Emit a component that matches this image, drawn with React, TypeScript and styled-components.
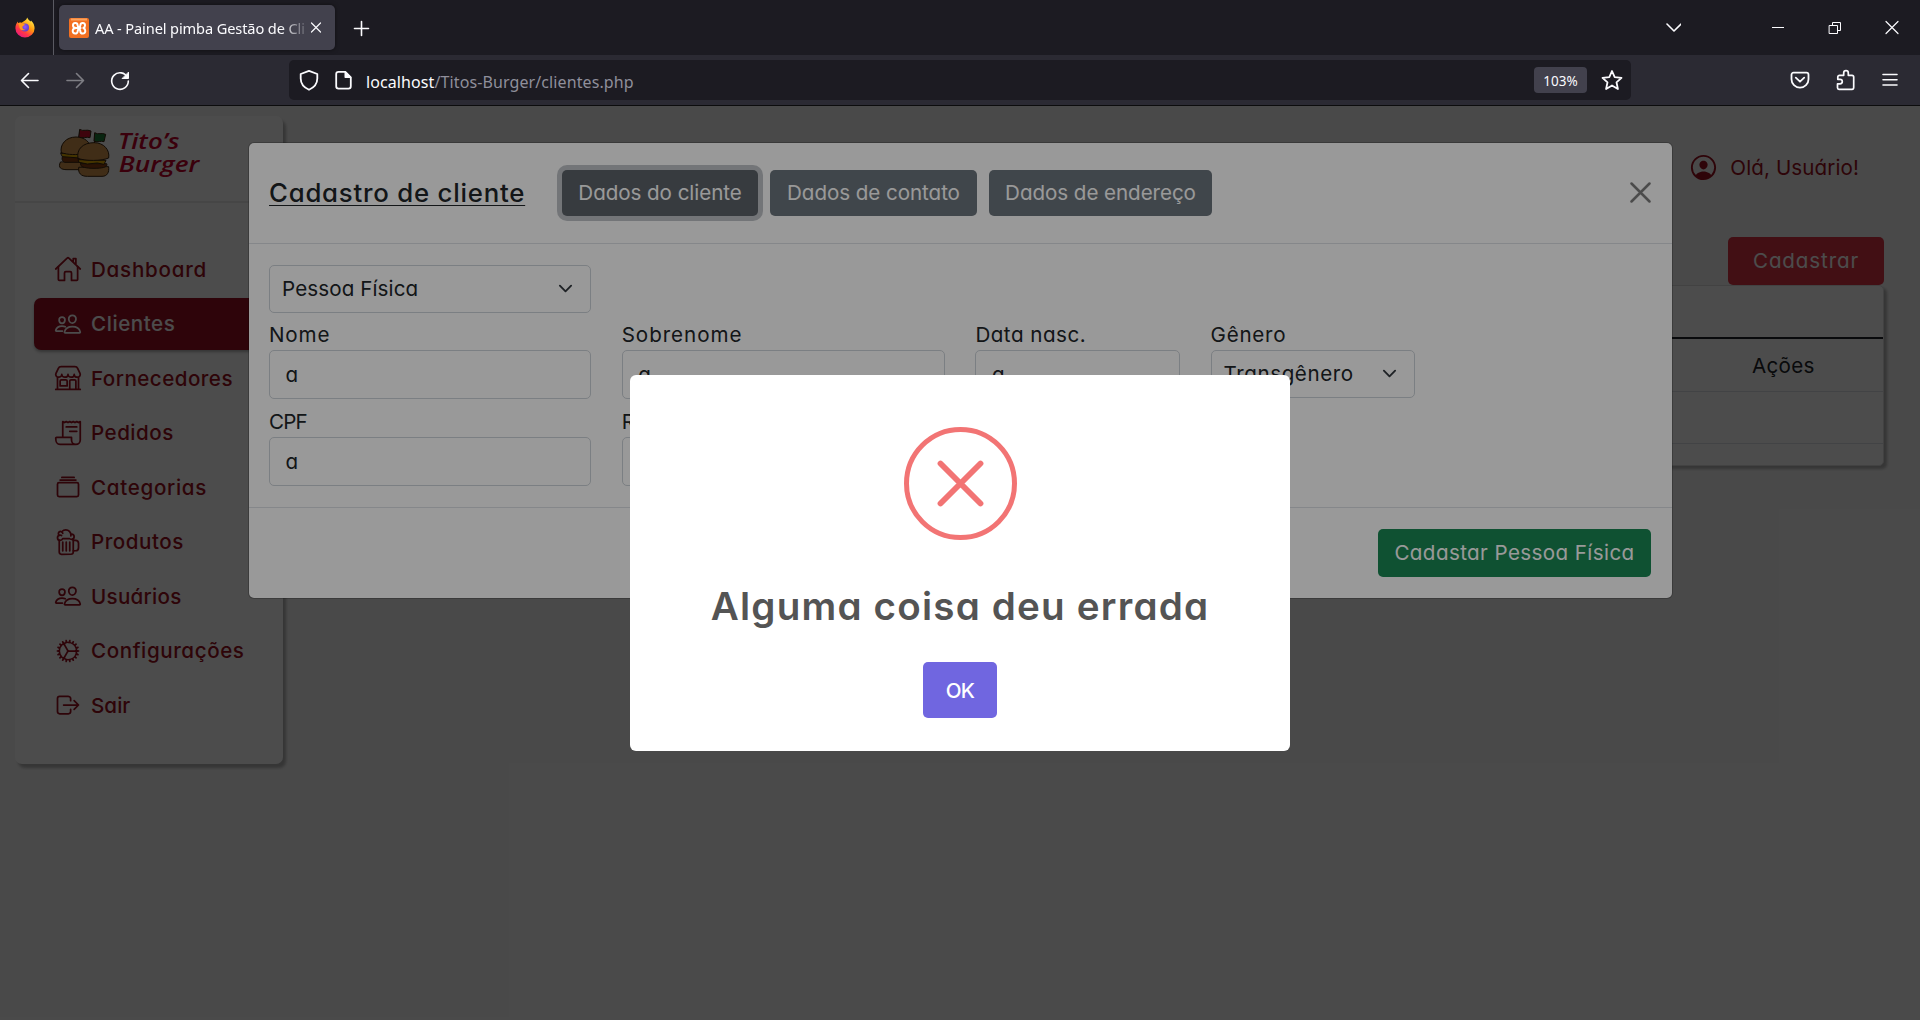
import React from 'react';
import styled, { createGlobalStyle } from 'styled-components';
import {
  IoAlbumsOutline,
  IoBeerOutline,
  IoCogOutline,
  IoHomeOutline,
  IoLogOutOutline,
  IoPeopleOutline,
  IoPersonCircleOutline,
  IoReceiptOutline,
  IoStorefrontOutline,
} from 'react-icons/io5';

const GlobalStyle = createGlobalStyle`
  *, *::before, *::after { box-sizing: border-box; }
  body {
    margin: 0;
    overflow: hidden;
    font-family: Inter, "Noto Sans", sans-serif;
    font-feature-settings: "cv11";
    font-size: 20.6px;
    color: #212529;
  }
  button { font: inherit; font-feature-settings: inherit; cursor: pointer; }
`;

/* ---------- browser window ---------- */

const Window = styled.div`
  width: 100vw;
  height: 100vh;
  display: flex;
  flex-direction: column;
  overflow: hidden;
`;

const Chrome = styled.header`
  flex: none;
  height: 106px;
  border-bottom: 1px solid #0c0c0d;
  background: #2b2a33;
  color: #fbfbfe;
  font-family: "Noto Sans", sans-serif;
`;

const TabStrip = styled.div`
  height: 55px;
  display: flex;
  align-items: center;
  background: #1c1b22;
`;

const FirefoxSlot = styled.div`
  width: 54px;
  height: 55px;
  padding-left: 15px;
  display: flex;
  align-items: center;
  border-right: 1px solid #5a5a62;
`;

const Tab = styled.div`
  width: 276px;
  height: 45px;
  margin-left: 5px;
  padding: 0 9px 0 10px;
  display: flex;
  align-items: center;
  border-radius: 5px;
  background: #42414d;
  box-shadow: 0 0 4px rgba(0, 0, 0, 0.5);
`;

const TabTitle = styled.span`
  flex: 1;
  margin-left: 6px;
  overflow: hidden;
  white-space: nowrap;
  font-size: 14.6px;
  letter-spacing: -0.12px;
  mask-image: linear-gradient(to right, #000 88%, transparent 102%);
`;

const Spacer = styled.div`
  flex: 1;
`;

const WindowControls = styled.div`
  display: flex;
  align-items: center;
  gap: 35px;
  padding-right: 17px;
`;

const NavBar = styled.div`
  height: 50px;
  display: flex;
  align-items: center;
`;

const NavButtons = styled.div`
  width: 289px;
  padding-left: 18px;
  display: flex;
  gap: 21px;
`;

const UrlBar = styled.div`
  width: 1342px;
  height: 40px;
  padding: 0 7px 0 8px;
  display: flex;
  align-items: center;
  border-radius: 5px;
  background: #1c1b22;
`;

const Url = styled.span`
  flex: 1;
  margin-left: 10px;
  padding-top: 3px;
  font-size: 16px;
  letter-spacing: 0.1px;
  color: #8f8f9b;
`;

const Host = styled.span`
  color: #fbfbfe;
`;

const ZoomChip = styled.span`
  width: 53px;
  height: 26px;
  margin-right: 13px;
  border-radius: 4px;
  background: #42414d;
  font-size: 13.5px;
  line-height: 28px;
  text-align: center;
`;

const ToolbarIcons = styled.div`
  margin-left: auto;
  padding-right: 18px;
  display: flex;
  gap: 21px;
`;

const ChromeIcon = styled.svg<{ $size?: number; $dim?: boolean }>`
  flex: none;
  display: block;
  width: ${(p) => p.$size ?? 24}px;
  height: ${(p) => p.$size ?? 24}px;
  fill: none;
  stroke: currentColor;
  stroke-width: 1.6;
  stroke-linecap: round;
  stroke-linejoin: round;
  opacity: ${(p) => (p.$dim ? 0.4 : 1)};
`;

const TabsMenuIcon = styled(ChromeIcon)`
  margin-right: 52px;
`;

const RestoreIcon = styled(ChromeIcon)`
  margin: 0 3px 0 4px;
`;

const PageIcon = styled(ChromeIcon)`
  margin-left: 11px;
`;

/* ---------- page behind the dialogs ---------- */

const Viewport = styled.div`
  position: relative;
  flex: 1;
  min-height: 0;
  background: #f6f6f6;
`;

const Page = styled.div`
  height: 100%;
  display: grid;
  grid-template-columns: 268px 1fr;
  gap: 17px;
  padding: 10px 36px 0 15px;
  align-items: start;
`;

const Sidebar = styled.aside`
  height: 648px;
  border-radius: 7px;
  background: #fff;
  box-shadow: 3px 4px 3px #b4b4b4;
`;

const Brand = styled.div`
  height: 88px;
  padding-left: 35px;
  border-bottom: 2px solid #ececec;
`;

const Menu = styled.nav`
  padding: 40.4px 0 0 19px;
  display: flex;
  flex-direction: column;
  gap: 2.5px;
`;

const MenuItem = styled.a<{ $active?: boolean; $spacing: number }>`
  width: 230px;
  height: 52px;
  padding-left: 20px;
  display: flex;
  align-items: center;
  gap: 9px;
  border-radius: 7px;
  font-weight: 500;
  letter-spacing: ${(p) => p.$spacing}px;
  color: ${(p) => (p.$active ? '#fff' : '#9b1020')};
  background: ${(p) => (p.$active ? '#9b1123' : 'transparent')};
  box-shadow: ${(p) => (p.$active ? '0 2px 3px rgba(0, 0, 0, 0.3)' : 'none')};

  svg {
    flex: none;
    width: 28px;
    height: 28px;
  }
`;

const Main = styled.main`
  display: flex;
  flex-direction: column;
  align-items: flex-end;
`;

const UserGreeting = styled.div`
  height: 31px;
  margin: 36px 25px 0 0;
  display: flex;
  align-items: center;
  gap: 11px;
  letter-spacing: 0.1px;
  color: #9b1020;

  svg {
    width: 31px;
    height: 31px;
  }
`;

const RegisterButton = styled.button`
  width: 156px;
  height: 48px;
  margin-top: 54px;
  padding: 0 0 1px;
  border: 0;
  border-radius: 5px;
  background: #dc3545;
  color: #fff;
  letter-spacing: 0.86px;
`;

const TableCard = styled.section`
  width: 100%;
  height: 181px;
  border: 1px solid #dfdfdf;
  border-radius: 5px;
  background: #fff;
  box-shadow: 3px 3px 3px #b4b4b4;
`;

const TableRow = styled.div<{ $height: number; $line: string }>`
  height: ${(p) => p.$height}px;
  display: flex;
  align-items: center;
  justify-content: flex-end;
  border-bottom: ${(p) => p.$line};
`;

const ActionsHeading = styled.span`
  width: 131px;
  letter-spacing: 0.3px;
`;

/* ---------- customer form dialog ---------- */

const Layer = styled.div<{ $shade: number; $align: string }>`
  position: absolute;
  inset: 0;
  display: flex;
  justify-content: center;
  align-items: ${(p) => p.$align};
  background: rgba(0, 0, 0, ${(p) => p.$shade});
`;

const FormDialog = styled.div`
  width: 1425px;
  height: 457px;
  margin: 36px 0 0 1px;
  border: 1px solid rgba(0, 0, 0, 0.2);
  background-clip: padding-box;
  background-color: #fff;
  border-radius: 6px;
`;

const FormHeader = styled.div`
  height: 101px;
  padding: 0 21px 1px 20px;
  display: flex;
  align-items: center;
  border-bottom: 1px solid #dee2e6;
`;

const FormTitle = styled.h5`
  width: 293px;
  margin: 0;
  font-size: 25.75px;
  font-weight: 500;
  letter-spacing: 0.79px;
  text-decoration: underline 1px;
  text-underline-offset: 3px;
  text-decoration-skip-ink: none;
`;

const StepButtons = styled.div`
  display: flex;
  gap: 12px;
`;

const StepButton = styled.button<{ $width: number; $active?: boolean }>`
  width: ${(p) => p.$width}px;
  height: 46px;
  padding: 0;
  border: 0;
  border-radius: 5px;
  color: #fff;
  letter-spacing: -0.06px;
  background: ${(p) => (p.$active ? '#5c636a' : '#6c757d')};
  box-shadow: ${(p) => (p.$active ? '0 0 0 5px rgba(130, 138, 145, 0.5)' : 'none')};
`;

const CloseIcon = styled.svg`
  width: 21px;
  height: 21px;
  margin-left: auto;
  opacity: 0.5;
`;

const FormBody = styled.div`
  height: 264px;
  padding: 21px 20px 0;
  border-bottom: 1px solid #dee2e6;
`;

const FieldGrid = styled.div`
  margin-top: 6.7px;
  display: grid;
  grid-template-columns: 322px 323px 204.5px 204px;
  gap: 7.7px 30.7px;
`;

const FieldLabel = styled.label<{ $spacing: number }>`
  display: block;
  height: 30px;
  line-height: 30px;
  letter-spacing: ${(p) => p.$spacing}px;
`;

const Input = styled.div`
  height: 49.3px;
  padding-left: 15.5px;
  border: 1px solid #ced4da;
  border-radius: 5px;
  line-height: 48.5px;
`;

const SelectBox = styled.div<{ $width: number; $spacing: number }>`
  width: ${(p) => p.$width}px;
  height: 48.3px;
  padding: 0 17px 1px 12px;
  display: flex;
  align-items: center;
  justify-content: space-between;
  border: 1px solid #ced4da;
  border-radius: 5px;
  letter-spacing: ${(p) => p.$spacing}px;
`;

const FormFooter = styled.div`
  padding: 21px 21px 0;
  display: flex;
  justify-content: flex-end;
`;

const SubmitButton = styled.button`
  width: 273px;
  height: 48px;
  padding: 0 0 1px;
  border: 0;
  border-radius: 5px;
  background: #198754;
  color: #fff;
  letter-spacing: 0.4px;
`;

/* ---------- error alert ---------- */

const Alert = styled.div`
  width: 660px;
  height: 376px;
  padding-top: 52px;
  display: flex;
  flex-direction: column;
  align-items: center;
  border-radius: 6px;
  background: #fff;
`;

const AlertTitle = styled.h2`
  margin: 41px 0 0;
  font-size: 38.6px;
  line-height: 50px;
  font-weight: 600;
  letter-spacing: 1.2px;
  white-space: nowrap;
  color: #545454;
`;

const OkButton = styled.button`
  width: 74px;
  height: 56px;
  margin-top: 31px;
  padding: 0;
  border: 0;
  border-radius: 5px;
  background: #7066e0;
  color: #fff;
  font-weight: 500;
  letter-spacing: -0.6px;
`;

/* ---------- drawings ---------- */

const FirefoxLogo = () => (
  <svg width="20" height="21" viewBox="0 0 20 21">
    <defs>
      <linearGradient id="ffBody" x1="0.85" y1="0.05" x2="0.2" y2="1">
        <stop offset="0" stopColor="#fff44f" />
        <stop offset="0.4" stopColor="#ff980e" />
        <stop offset="0.7" stopColor="#ff3647" />
        <stop offset="1" stopColor="#e31587" />
      </linearGradient>
      <radialGradient id="ffGlobe" cx="0.5" cy="0.4" r="0.6">
        <stop offset="0" stopColor="#9059ff" />
        <stop offset="1" stopColor="#5b3bc4" />
      </radialGradient>
    </defs>
    <path
      d="M12.300 0.600c.5 1.700 2 2.700 3.100 3.900.5-.2.6-.7.6-1 2.400 2.100 3.600 5 3.600 7.700a9.600 9.300 0 0 1-19.200 0c0-2.600.9-5 2.500-6.700 0 .8.2 1.300.5 1.700.9-.8 2.200-.9 3.300-.5C8.200 4.500 11.300 3.600 12.300.6z"
      fill="url(#ffBody)"
    />
    <circle cx="10" cy="10.600" r="4" fill="url(#ffGlobe)" />
    <path d="M3.300 6.200c1.500-.8 3-.5 4 .6 1 0 2 .1 2.600.8-.3 1.100-1.900 1.200-2.400 1.900-.3 1.500.6 3.300 2.900 3.300-2.900 1.700-6.300-.7-6.100-3.900z" fill="#ff9a1c" />
  </svg>
);

/* Four rounded lobes joined by a crossbar */
const XamppLogo = () => (
  <svg width="20" height="20" viewBox="0 0 20 20">
    <rect width="20" height="20" rx="2" fill="#f37021" />
    <rect x="2" y="0.500" width="16" height="2" fill="#fba35e" />
    <path
      d="M7.600 9.900H12.400M7.600 9.900C5 9.900 4 8.800 4 7.400a2.300 2.300 0 0 1 4.600-.2c0 1.200.6 1.500 1.400 1.500s1.400-.3 1.400-1.500a2.300 2.300 0 0 1 4.600.2c0 1.400-.8 2.200-1.600 2.600 1 .5 1.900 1.600 1.900 3a2.500 2.500 0 0 1-5 .2c0-1.300-.5-1.700-1.300-1.700s-1.300.4-1.300 1.700a2.500 2.500 0 0 1-5-.2c0-1.800 1.400-3.100 3.900-3.100z"
      fill="none"
      stroke="#fff"
      strokeWidth="2"
      strokeLinejoin="round"
    />
  </svg>
);

const Chevron = () => (
  <svg width="15" height="15" viewBox="0 0 16 16" fill="none" stroke="#343a40" strokeWidth="2" strokeLinecap="round" strokeLinejoin="round">
    <path d="m2 5 6 6 6-6" />
  </svg>
);

/* Two stacked hamburgers with flags beside the wordmark */
const TitosLogo = () => (
  <svg width="170" height="75" viewBox="0 0 510 225">
    <g stroke="#3a2510" strokeWidth="3" strokeLinejoin="round" strokeLinecap="round">
      <path d="M86 78 90 44" />
      <path d="M90 44c10 6 20-2 33 4l-3 20c-12-4-20 4-33-1z" fill="#d0102c" />
      <path d="M31 142c-8 16 2 22 20 22h50v-24z" fill="#d8984e" />
      <path d="M38 124h66v18H44c-8-3-10-12-6-18z" fill="#8a3f10" />
      <path d="M33 115h75v12l-20 2-50-4z" fill="#e8b000" />
      <path d="M34 113c-6-24 14-47 44-47 26 0 44 16 44 36l-20 14c-22 4-48 4-68-3z" fill="#d8984e" />
      <path d="M133 94 135 54" />
      <path d="M135 54c10 6 20-2 32 4l-5 22c-10-4-18 4-29-1z" fill="#1d7d36" />
      <path d="M86 158c-2 16 6 26 26 26h44c16 0 22-12 20-28z" fill="#d8984e" />
      <path d="M92 146h78c4 9-8 14-38 14s-44-6-40-14z" fill="#8a3f10" />
      <path d="M85 134l83 2-6 12-20-4-30 3-24-5z" fill="#e8b000" />
      <path d="M84 130c-6-28 16-47 48-47 30 0 48 22 44 46-20 9-70 10-92 1z" fill="#d8984e" />
    </g>
    <g fill="#c4002a" fontFamily="'Open Sans', 'Noto Sans', sans-serif" fontStyle="italic" fontWeight="600">
      <text x="204" y="101" fontSize="67" textLength="184" lengthAdjust="spacingAndGlyphs">Tito’s</text>
      <text x="206" y="171" fontSize="67" textLength="242" lengthAdjust="spacingAndGlyphs">Burger</text>
    </g>
  </svg>
);

const BrandArt = styled.div`
  height: 75px;
  margin-top: -1px;
`;

const menu = [
  { label: 'Dashboard', icon: IoHomeOutline, spacing: 0.74 },
  { label: 'Clientes', icon: IoPeopleOutline, spacing: 0.55 },
  { label: 'Fornecedores', icon: IoStorefrontOutline, spacing: 0.46 },
  { label: 'Pedidos', icon: IoReceiptOutline, spacing: 0.48 },
  { label: 'Categorias', icon: IoAlbumsOutline, spacing: 0.68 },
  { label: 'Produtos', icon: IoBeerOutline, spacing: 0.52 },
  { label: 'Usuários', icon: IoPeopleOutline, spacing: 0.28 },
  { label: 'Configurações', icon: IoCogOutline, spacing: 0.58 },
  { label: 'Sair', icon: IoLogOutOutline, spacing: 0.05 },
];

const BrowserChrome = () => (
  <Chrome>
    <TabStrip>
      <FirefoxSlot><FirefoxLogo /></FirefoxSlot>
      <Tab>
        <XamppLogo />
        <TabTitle>AA - Painel pimba Gestão de Cli</TabTitle>
        <ChromeIcon $size={20} viewBox="0 0 20 20"><path d="m5.500 5 9 9m0-9-9 9" strokeWidth="1.200" /></ChromeIcon>
      </Tab>
      <ChromeIcon $size={52} viewBox="0 0 52 52"><path d="M19.500 26.500h14M26.500 19.500v14" /></ChromeIcon>
      <Spacer />
      <WindowControls>
        <TabsMenuIcon $size={18} viewBox="0 0 18 18"><path d="m4 5 7 7 7-7" /></TabsMenuIcon>
        <ChromeIcon $size={18} viewBox="0 0 18 18"><path d="M4 8.500h12" strokeWidth="1" strokeLinecap="butt" /></ChromeIcon>
        <RestoreIcon $size={18} viewBox="0 0 18 18">
          <path d="M4.500 6.500h8v8h-8zM7.500 6.500v-3h8v8h-3" strokeWidth="1" strokeLinejoin="miter" />
        </RestoreIcon>
        <ChromeIcon $size={22} viewBox="0 0 22 22"><path d="m5 4.500 12 12m0-12-12 12" strokeWidth="1.200" /></ChromeIcon>
      </WindowControls>
    </TabStrip>
    <NavBar>
      <NavButtons>
        <ChromeIcon viewBox="0 0 24 24"><path d="M20 12.500H4m6.500-7-7 7 7 7" /></ChromeIcon>
        <ChromeIcon $dim viewBox="0 0 24 24"><path d="M4 12.500h16m-6.500-7 7 7-7 7" /></ChromeIcon>
        <ChromeIcon viewBox="0 0 24 24">
          <path d="M19.500 9.500A8.300 8.300 0 1 0 20.300 13" />
          <path d="M20.500 4.500v6h-6z" fill="currentColor" strokeWidth="1" />
        </ChromeIcon>
      </NavButtons>
      <UrlBar>
        <ChromeIcon viewBox="0 0 24 24"><path d="M12 2.800 20.300 6v4.500c0 5-3.300 9-8.300 11.300-5-2.300-8.300-6.300-8.300-11.300V6z" strokeWidth="1.800" /></ChromeIcon>
        <PageIcon viewBox="0 0 24 24">
          <path d="M6.500 3.800h6.800l5.500 5.500v9a2.300 2.300 0 0 1-2.300 2.300h-10a2.300 2.300 0 0 1-2.300-2.300V6.100a2.300 2.300 0 0 1 2.300-2.300z" strokeWidth="1.800" />
          <path d="M13.300 4v5.300h5.200z" fill="currentColor" />
        </PageIcon>
        <Url><Host>localhost</Host>/Titos-Burger/clientes.php</Url>
        <ZoomChip>103%</ZoomChip>
        <ChromeIcon viewBox="0 0 24 24"><path d="m12 3 2.700 6.100 6.800.7-5 4.500 1.400 6.700-5.900-3.500L6.100 21l1.400-6.700-5-4.500 6.800-.7z" strokeWidth="1.800" /></ChromeIcon>
      </UrlBar>
      <ToolbarIcons>
        <ChromeIcon viewBox="0 0 24 24">
          <path d="M5.500 4.700h13a2 2 0 0 1 2 2v4.500a8.500 8.500 0 0 1-17 0V6.700a2 2 0 0 1 2-2z" strokeWidth="1.800" />
          <path d="m7.800 9.700 4.200 4 4.200-4" strokeWidth="1.800" />
        </ChromeIcon>
        <ChromeIcon viewBox="0 0 24 24">
          <path d="M6 21.300h13a1.700 1.700 0 0 0 1.700-1.700V9a1.700 1.700 0 0 0-1.700-1.700h-3.700V5a2.300 2.300 0 0 0-4.600 0v2.300H6.500A1.700 1.700 0 0 0 4.800 9v2.300h2.200a2.300 2.300 0 0 1 0 4.600H4.500v3.900A1.500 1.500 0 0 0 6 21.300z" strokeWidth="1.700" />
        </ChromeIcon>
        <ChromeIcon viewBox="0 0 24 24"><path d="M5 6.500h14M5 11.800h14M5 17h14" /></ChromeIcon>
      </ToolbarIcons>
    </NavBar>
  </Chrome>
);

const Field = ({ label, spacing, children }: { label: string; spacing: number; children: React.ReactNode }) => (
  <div>
    <FieldLabel $spacing={spacing}>{label}</FieldLabel>
    {children}
  </div>
);

export default function App() {
  return (
    <Window>
      <GlobalStyle />
      <BrowserChrome />
      <Viewport>
        <Page>
          <Sidebar>
            <Brand><BrandArt><TitosLogo /></BrandArt></Brand>
            <Menu>
              {menu.map(({ label, icon: Icon, spacing }) => (
                <MenuItem key={label} $active={label === 'Clientes'} $spacing={spacing}>
                  <Icon />
                  {label}
                </MenuItem>
              ))}
            </Menu>
          </Sidebar>
          <Main>
            <UserGreeting><IoPersonCircleOutline />Olá, Usuário!</UserGreeting>
            <RegisterButton>Cadastrar</RegisterButton>
            <TableCard>
              <TableRow $height={53} $line="2px solid #212529" />
              <TableRow $height={53} $line="1px solid #dee2e6"><ActionsHeading>Ações</ActionsHeading></TableRow>
              <TableRow $height={52} $line="1px solid #dee2e6" />
            </TableCard>
          </Main>
        </Page>

        <Layer $shade={0.5} $align="flex-start">
          <FormDialog>
            <FormHeader>
              <FormTitle>Cadastro de cliente</FormTitle>
              <StepButtons>
                <StepButton $width={196} $active>Dados do cliente</StepButton>
                <StepButton $width={207}>Dados de contato</StepButton>
                <StepButton $width={223}>Dados de endereço</StepButton>
              </StepButtons>
              <CloseIcon viewBox="0 0 21 21"><path d="m1.500 1.500 18 18m0-18-18 18" stroke="#000" strokeWidth="2.500" strokeLinecap="round" /></CloseIcon>
            </FormHeader>
            <FormBody>
              <SelectBox $width={322} $spacing={0.1}>Pessoa Física<Chevron /></SelectBox>
              <FieldGrid>
                <Field label="Nome" spacing={0.85}><Input>a</Input></Field>
                <Field label="Sobrenome" spacing={0.95}><Input>a</Input></Field>
                <Field label="Data nasc." spacing={0.5}><Input>a</Input></Field>
                <Field label="Gênero" spacing={0.75}>
                  <SelectBox $width={204} $spacing={0.58}>Transgênero<Chevron /></SelectBox>
                </Field>
                <Field label="CPF" spacing={-0.79}><Input>a</Input></Field>
                <Field label="RG" spacing={0}><Input>a</Input></Field>
              </FieldGrid>
            </FormBody>
            <FormFooter><SubmitButton>Cadastar Pessoa Física</SubmitButton></FormFooter>
          </FormDialog>
        </Layer>

        <Layer $shade={0.4} $align="center">
          <Alert>
            <svg width="113" height="113" viewBox="0 0 113 113" fill="none" stroke="#f27474" strokeWidth="5">
              <circle cx="56.500" cy="56.500" r="54" />
              <path d="m36.500 36.500 40 40m0-40-40 40" strokeWidth="5.800" strokeLinecap="round" />
            </svg>
            <AlertTitle>Alguma coisa deu errada</AlertTitle>
            <OkButton>OK</OkButton>
          </Alert>
        </Layer>
      </Viewport>
    </Window>
  );
}
